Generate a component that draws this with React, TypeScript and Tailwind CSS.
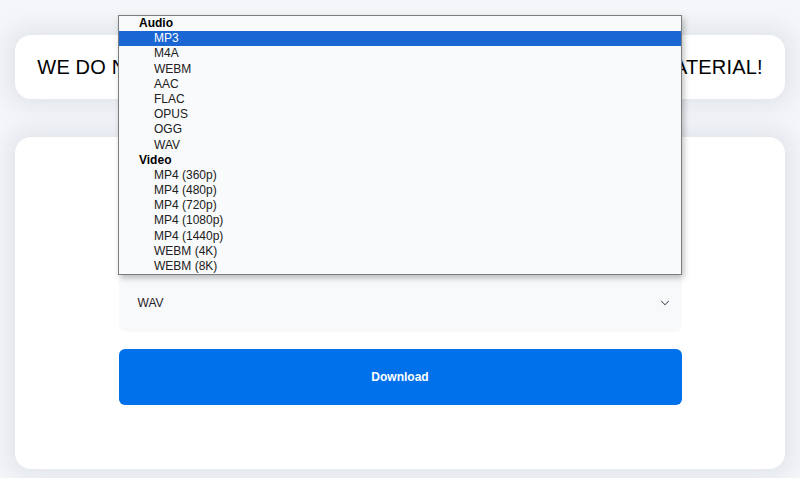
import { ChevronDown } from 'lucide-react'

const audio = ['MP3', 'M4A', 'WEBM', 'AAC', 'FLAC', 'OPUS', 'OGG', 'WAV']
const video = ['MP4 (360p)', 'MP4 (480p)', 'MP4 (720p)', 'MP4 (1080p)', 'MP4 (1440p)', 'WEBM (4K)', 'WEBM (8K)']

function Option({ label, active }: { label: string; active?: boolean }) {
  return (
    <div
      className={
        active
          ? 'h-[15.2px] leading-[15.2px] pl-[35px] bg-[#1a66d2] text-white'
          : 'h-[15.2px] leading-[15.2px] pl-[35px] text-[#202020]'
      }
    >
      {label}
    </div>
  )
}

function FormatPopup() {
  return (
    <div className="absolute left-[118px] top-[15px] w-[564px] h-[260px] border border-[#7c7c7c] bg-[#f9fafb] shadow-[2px_3px_6px_rgba(0,0,0,0.25)] text-[12px] font-['Liberation_Sans',Arial,sans-serif] overflow-hidden">
      <div className="h-[15.2px] leading-[15.2px] pl-[20px] font-bold text-black">Audio</div>
      {audio.map((f) => (
        <Option key={f} label={f} active={f === 'MP3'} />
      ))}
      <div className="h-[15.2px] leading-[15.2px] pl-[20px] font-bold text-black">Video</div>
      {video.map((f) => (
        <Option key={f} label={f} />
      ))}
    </div>
  )
}

export default function App() {
  return (
    <div className="relative min-h-screen bg-[#f4f6f9] px-[15px] pt-[35px] pb-[10px] font-['Liberation_Sans',Arial,sans-serif]">
      <div className="h-[64px] rounded-[16px] bg-white shadow-[0_0_20px_8px_rgba(200,205,215,0.4)] flex items-center justify-center">
        <p className="text-[20px] tracking-[0.16px] text-black whitespace-nowrap">
          WE DO NOT SUPPORT DOWNLOADING OF ANY COPYRIGHTED MATERIAL!
        </p>
      </div>

      <div className="mt-[38px] h-[332px] rounded-[16px] bg-white shadow-[0_0_20px_8px_rgba(200,205,215,0.4)]">
        <div className="mx-auto w-[563px] pt-[137px]">
          <div className="h-[58px] rounded-[8px] bg-[#f8f9fb] flex items-center justify-between pl-[19px] pr-[10px] text-[12px] text-[#1f2328]">
            <span>WAV</span>
            <ChevronDown className="w-[14px] h-[14px] text-[#4b5563]" strokeWidth={1.8} />
          </div>
          <button className="mt-[17px] w-full h-[56px] rounded-[6px] bg-[#0071eb] text-white text-[12px] font-bold">
            Download
          </button>
        </div>
      </div>

      <FormatPopup />
    </div>
  )
}
